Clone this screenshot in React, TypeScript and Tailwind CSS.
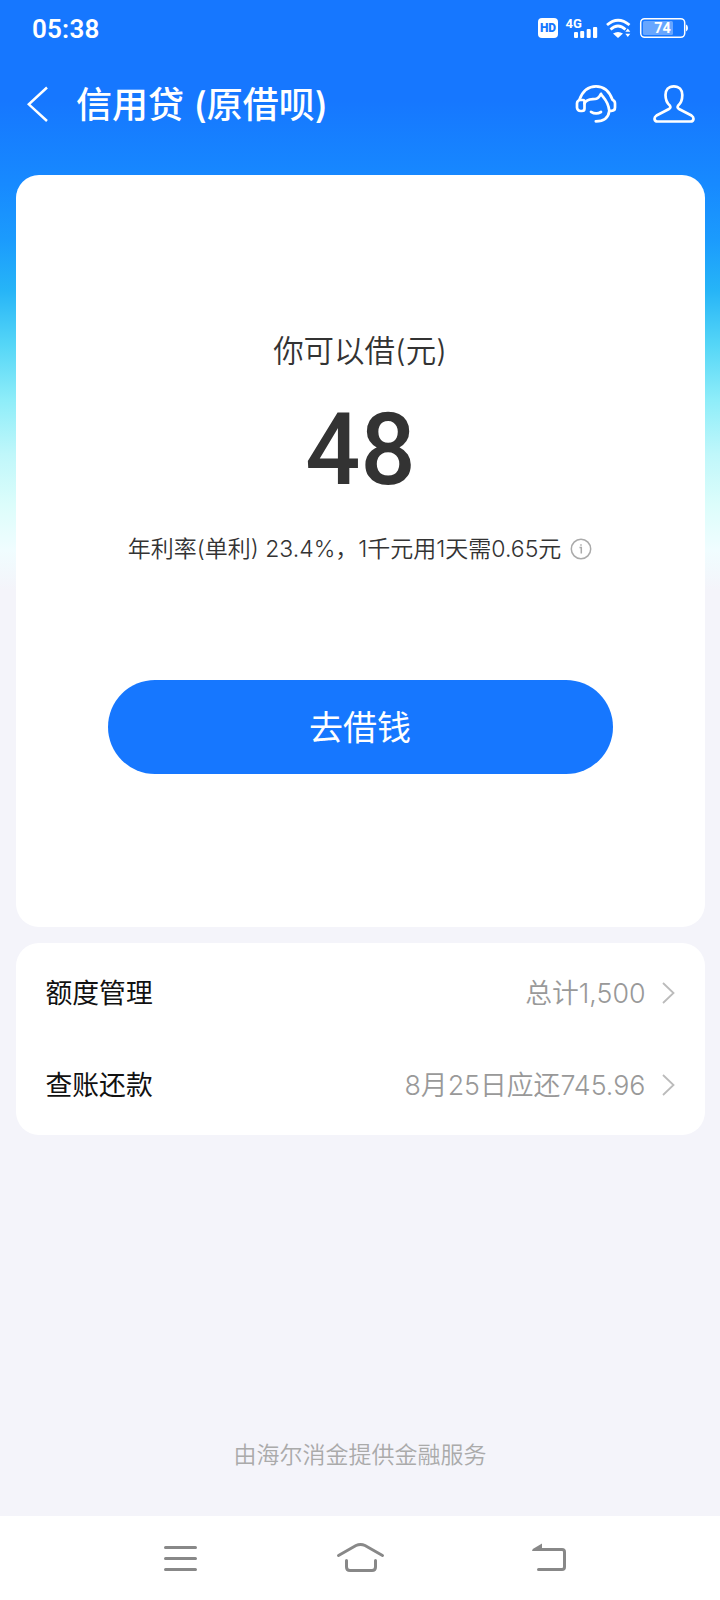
const rows = [
  { label: "额度管理", value: "总计1,500" },
  { label: "查账还款", value: "8月25日应还745.96" },
];

function StatusBar() {
  return (
    <div className="flex h-14 items-center justify-between px-8 text-white">
      <span className="pt-0.5 font-[Roboto] text-[26px] font-semibold leading-none tracking-[0.2px]">05:38</span>
      <svg width="150" height="22" viewBox="538 17 150 22" fill="none">
        <rect x="538" y="18" width="20" height="20" rx="4" fill="#fff" />
        <text x="548" y="32.4" textAnchor="middle" fontFamily="Roboto, sans-serif" fontSize="12" fontWeight="900" fill="#1677ff">
          HD
        </text>
        <text x="565.5" y="28" fontFamily="Roboto, sans-serif" fontSize="13" fontWeight="700" fill="#fff">
          4G
        </text>
        <g fill="#fff">
          <rect x="574" y="32" width="4" height="6" rx="1" />
          <rect x="580.2" y="31" width="4" height="7" rx="1" />
          <rect x="586.7" y="29" width="4" height="9" rx="1" />
          <rect x="593" y="27" width="4.2" height="11" rx="1" />
          <path d="M613 33.5 L618 38 L623 33.5 Q618 30.5 613 33.5Z" />
          <path d="M625.3 31.8 l2.5 -3.3 2.5 3.3z M625.3 33.8 l2.5 3.3 2.5 -3.3z" />
        </g>
        <g stroke="#fff" strokeWidth="2.8">
          <path d="M607 25 Q618 15.5 629.5 25" />
          <path d="M610.5 29.5 Q618 22.5 625.5 29.5" />
        </g>
        <rect x="640.7" y="18.7" width="44" height="18.6" rx="4" stroke="#fff" strokeWidth="1.5" />
        <rect x="643" y="21" width="30" height="14" rx="1.5" fill="#fff" fillOpacity=".35" />
        <path d="M686 24.5 q2 .5 2 3.5 t-2 3.5z" fill="#fff" />
        <text x="662.5" y="33" textAnchor="middle" fontFamily="Roboto, sans-serif" fontSize="14.5" fontWeight="700" fill="#fff">
          74
        </text>
      </svg>
    </div>
  );
}

function TitleBar() {
  return (
    <header className="flex h-[119px] items-start pl-[27px] pr-[25px] text-white">
      <svg className="mt-[30px]" width="22" height="36" viewBox="0 0 22 36" fill="none" stroke="#fff" strokeWidth="2.5">
        <path d="M20 1.5 L1.8 18.3 L20 35" />
      </svg>
      <h1 className="ml-[27px] mt-[25px] whitespace-nowrap text-[36px] font-medium leading-[48px]">
        信用贷 (原借呗)
      </h1>
      <div className="ml-auto mt-7 flex gap-[36px]">
        <svg width="42" height="42" viewBox="575 84 42 42" fill="none" stroke="#fff" strokeWidth="2.7" strokeLinecap="round" strokeLinejoin="round">
          <path d="M580.5 100 h2.5 a1.5 1.5 0 0 1 1.5 1.5 v7 a2.5 2.5 0 0 1 -2.5 2.5 h-1.5 a3.5 3.5 0 0 1 -3.5 -3.5 v-4 a3.5 3.5 0 0 1 3.5 -3.5z" />
          <path d="M579.5 99.5 C583 90 588 86.3 596 86.3 S609 90 612.5 99.8 C614 100.5 615 101.5 615 103.5 V107.5 C615 109.5 613.5 110.8 611.5 110.8 H609.5" />
          <path d="M584.5 103.5 C587 98 592.5 99.8 596.5 98.7 C599 98 600 96 601 93.8 C602 97 608 99.5 609.3 110.8 C608.5 117.5 603.5 121.3 595.8 121.3" />
          <path d="M591 111.8 Q596 115 601 112" />
        </svg>
        <svg width="42" height="42" viewBox="653 84 42 42" fill="none" stroke="#fff" strokeWidth="2.7" strokeLinejoin="round">
          <path d="M673.8 86.3 C668.5 86.3 665.5 90 665.5 95 C665.5 101 667.5 103.5 669.8 105.5 C670.8 106.8 670.5 108 669 109 L656.5 115.5 C653.5 117.5 654 121.5 657.5 121.5 H690.5 C694 121.5 694.5 117.5 691.5 115.5 L679 109 C677.5 108 677.2 106.8 678.2 105.5 C680.5 103.5 682.3 101 682.3 95 C682.3 90 679.2 86.3 673.8 86.3Z" />
        </svg>
      </div>
    </header>
  );
}

function LoanCard() {
  return (
    <section className="flex h-[752px] flex-col items-center rounded-[23px] bg-white text-[#333]">
      <h2 className="mt-[156px] text-[30.5px] font-[350] leading-10">你可以借(元)</h2>
      <p className="mt-[29px] font-[Roboto] text-[101px] font-medium leading-[100px]">
        <span className="inline-block scale-x-[0.96]">48</span>
      </p>
      <div className="mt-[33px] flex items-center gap-[9px]">
        <p className="whitespace-nowrap text-[23px] font-[350] leading-8">
          年利率(单利) 23.4%，1千元用1天需0.65元
        </p>
        <svg width="22" height="22" viewBox="0 0 22 22" fill="none" stroke="#aaa" strokeWidth="1.5">
          <circle cx="11" cy="11" r="9.7" />
          <path d="M9.5 9.5 H11.3 V15.5 M11 6.3 v1.5" />
        </svg>
      </div>
      <button className="mt-[115px] h-[94px] w-[505px] rounded-full bg-[#1677ff] text-[34px] text-white">
        去借钱
      </button>
    </section>
  );
}

function Row({ label, value }: { label: string; value: string }) {
  return (
    <div className="flex h-[92px] items-center px-[30px]">
      <span className="pt-px text-[26.8px] text-[#111]">{label}</span>
      <span className="ml-auto pt-px text-[26.8px] font-[350] text-[#999]">{value}</span>
      <svg className="ml-4" width="13" height="22" viewBox="0 0 13 22" fill="none" stroke="#bbb" strokeWidth="1.8">
        <path d="M1 1 L11.5 11 L1 21" />
      </svg>
    </div>
  );
}

function NavBar() {
  return (
    <nav className="flex h-[84px] items-start bg-white pl-[163px] pt-[24px]">
      <svg width="404" height="36" viewBox="163 1540 404 36" fill="none" stroke="#888" strokeWidth="3" strokeLinecap="round" strokeLinejoin="round">
        <path d="M165.5 1547.5 H195.5 M165.5 1558.5 H195.5 M165.5 1569.5 H195.5" />
        <path d="M338.5 1555.5 L356 1545.5 Q360.5 1543.3 365 1545.5 L382.5 1555.5" />
        <path d="M346.5 1560.5 V1567 Q346.5 1570.5 350 1570.5 H372 Q375.5 1570.5 375.5 1567 V1560.5" />
        <path d="M538.5 1569.5 H562 Q564.5 1569.5 564.5 1567 V1552 Q564.5 1549.5 562 1549.5 H541" />
        <path d="M532 1550.5 Q532 1549.5 534 1548.2 L542 1543.5 V1551 H532.5Z" fill="#888" stroke="none" />
      </svg>
    </nav>
  );
}

export default function App() {
  return (
    <div className="flex h-[1600px] w-[720px] flex-col bg-[#f4f4fa] bg-[linear-gradient(180deg,#1677ff_0px,#1677ff_100px,#178aff_185px,#1b9bfd_240px,#26b4f7_290px,#55d6f7_345px,#8eedf9_400px,#c0f7fa_455px,#dcfdfb_505px,#f0fdff_550px,#f4f4fa_590px)] font-[Inter,'Noto_Sans_CJK_SC',sans-serif]">
      <StatusBar />
      <TitleBar />
      <main className="flex flex-1 flex-col px-[15.5px]">
        <LoanCard />
        <section className="mt-4 h-[192px] rounded-[23px] bg-white pt-1">
          {rows.map((row) => (
            <Row key={row.label} {...row} />
          ))}
        </section>
        <p className="mb-[45px] mt-auto text-center text-[23px] font-[350] leading-8 text-[#aaa]">
          由海尔消金提供金融服务
        </p>
      </main>
      <NavBar />
    </div>
  );
}
